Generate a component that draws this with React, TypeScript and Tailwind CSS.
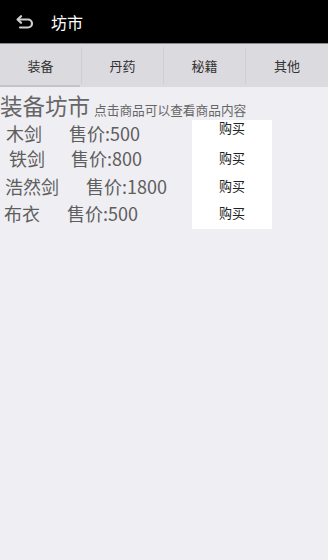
const tabs = ["装备", "丹药", "秘籍", "其他"];

const items = [
  { name: "木剑", price: "售价:500", nameX: "pl-[6px]", gap: "w-[27px]", h: "h-[26px]", btn: "h-[23px] items-start pt-[1px]" },
  { name: "铁剑", price: "售价:800", nameX: "pl-[9px]", gap: "w-[26px]", h: "h-[24px]", btn: "h-[28px] items-center" },
  { name: "浩然剑", price: "售价:1800", nameX: "pl-[5px]", gap: "w-[27px]", h: "h-[32px]", btn: "h-[28px] items-center" },
  { name: "布衣", price: "售价:500", nameX: "pl-[4px]", gap: "w-[27px]", h: "h-[22px]", btn: "h-[26px] items-center" },
];

function BackIcon() {
  return (
    <svg viewBox="0 0 18 14" className="w-[18px] h-[14px] ml-[16px]" fill="none" stroke="#cfcfcf" strokeWidth={2.2} strokeLinecap="round" strokeLinejoin="round">
      <path d="M5 1.2 1.6 4.5 5 7.8" />
      <path d="M2 4.5h10a4 4 0 0 1 0 8H4" />
    </svg>
  );
}

export default function App() {
  return (
    <div
      className="w-[328px] h-[560px] bg-[#efeef3] flex flex-col overflow-hidden"
      style={{ fontFamily: '"Noto Sans CJK SC", "Noto Sans", sans-serif' }}
    >
      {/* action bar */}
      <div className="h-[43px] bg-black flex items-center shrink-0">
        <BackIcon />
        <span className="ml-[17px] text-white text-[16px] leading-none">坊市</span>
      </div>
      <div className="h-px bg-[#8a8a8a] shrink-0" />

      {/* tabs */}
      <div className="h-[43px] bg-[#dbdadf] flex shrink-0">
        {tabs.map((t, i) => (
          <div key={t} className="flex-1 flex relative">
            <div className="flex-1 flex items-center justify-center text-[13px] text-[#333]">{t}</div>
            {i < tabs.length - 1 && <div className="w-px my-[3px] bg-[#cfced3]" />}
            {i === 0 && <div className="absolute left-0 right-[2px] bottom-0 h-[2px] bg-[#c4c3c8]" />}
          </div>
        ))}
      </div>

      {/* content */}
      <div className="flex items-end h-[33px] shrink-0">
        <span className="text-[22.5px] text-[#666] leading-none mb-[4px]">装备坊市</span>
        <span className="ml-[4px] text-[12.7px] text-[#666] leading-none mb-[3px]">点击商品可以查看商品内容</span>
      </div>

      <div className="flex">
        <div className="w-[192px] flex flex-col">
          {items.map((it) => (
            <div key={it.name} className={`${it.h} flex items-center text-[18px] text-[#5e5e5e] leading-none`}>
              <span className={it.nameX}>{it.name}</span>
              <span className={it.gap} />
              <span>{it.price}</span>
            </div>
          ))}
        </div>
        <div className="w-[80px] bg-white flex flex-col pb-[4px]">
          {items.map((it) => (
            <div
              key={it.name}
              className={`${it.btn} flex justify-center text-[13px] text-[#222] leading-none`}
            >
              购买
            </div>
          ))}
        </div>
      </div>
    </div>
  );
}
